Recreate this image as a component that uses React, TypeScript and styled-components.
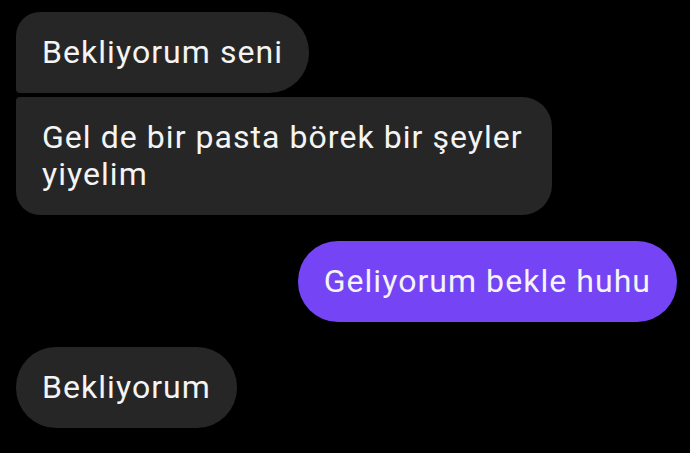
import React from "react";
import styled, { createGlobalStyle } from "styled-components";

const GlobalStyle = createGlobalStyle`
  html, body {
    margin: 0;
    padding: 0;
    background: #000;
  }
  body {
    font-family: Roboto, "Noto Sans", "Liberation Sans", sans-serif;
    -webkit-font-smoothing: antialiased;
  }
`;

const Thread = styled.div`
  width: 690px;
  height: 453px;
  box-sizing: border-box;
  padding: 12px 13px 0 16px;
  display: flex;
  flex-direction: column;
  background: #000;
  overflow: hidden;
`;

const Group = styled.div<{ $mine?: boolean; $gap: number }>`
  display: flex;
  flex-direction: column;
  align-items: ${(p) => (p.$mine ? "flex-end" : "flex-start")};
  gap: 4px;
  margin-top: ${(p) => p.$gap}px;
`;

type Corner = "single" | "first" | "last";

const radii: Record<Corner, string> = {
  single: "40px",
  first: "24px 40px 40px 4px",
  last: "4px 30px 30px 24px",
};

const Bubble = styled.div<{ $mine?: boolean; $corner: Corner }>`
  box-sizing: border-box;
  max-width: 536px;
  padding: 22px 26px 22px 26px;
  border-radius: ${(p) => radii[p.$corner]};
  background: ${(p) => (p.$mine ? "#7544f4" : "#262626")};
  color: #f4f4f4;
  font-size: 32px;
  line-height: 37px;
  letter-spacing: 1.05px;
  font-weight: 400;
`;

export default function App() {
  return (
    <>
      <GlobalStyle />
      <Thread>
        <Group $gap={0}>
          <Bubble $corner="first">Bekliyorum seni</Bubble>
          <Bubble $corner="last">Gel de bir pasta börek bir şeyler yiyelim</Bubble>
        </Group>
        <Group $mine $gap={26}>
          <Bubble $mine $corner="single">Geliyorum bekle huhu</Bubble>
        </Group>
        <Group $gap={25}>
          <Bubble $corner="single">Bekliyorum</Bubble>
        </Group>
      </Thread>
    </>
  );
}
